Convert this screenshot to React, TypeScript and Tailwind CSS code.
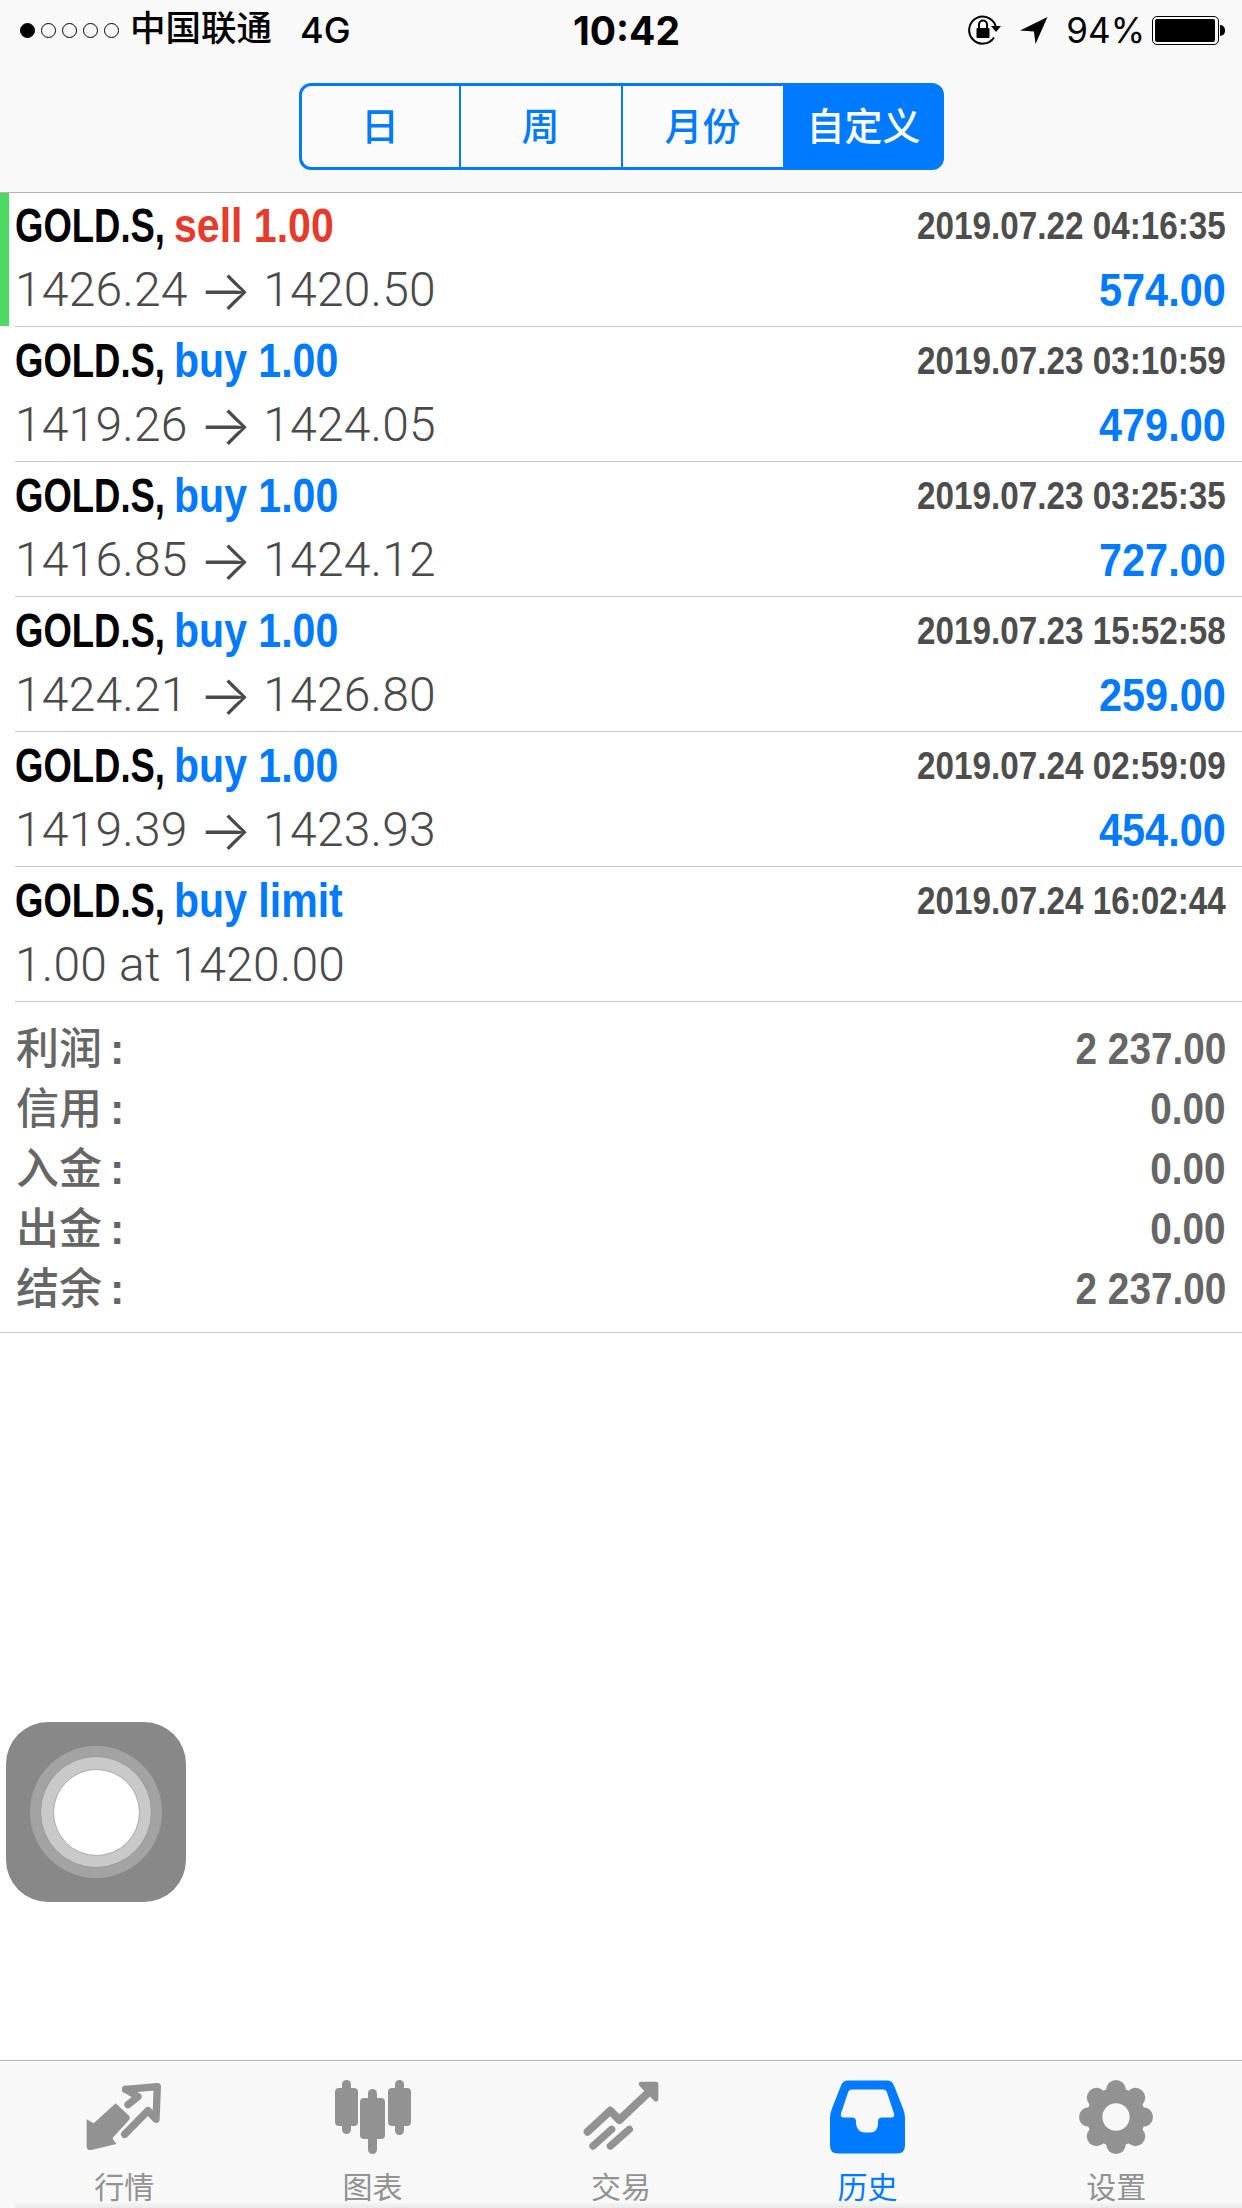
const SANS = "font-['Liberation_Sans','Noto_Sans_CJK_SC',sans-serif]";

const orders = [
  { side: "sell 1.00", color: "text-[#e63b2a]", time: "2019.07.22 04:16:35", from: "1426.24", to: "1420.50", profit: "574.00", active: true },
  { side: "buy 1.00", color: "text-[#007aff]", time: "2019.07.23 03:10:59", from: "1419.26", to: "1424.05", profit: "479.00" },
  { side: "buy 1.00", color: "text-[#007aff]", time: "2019.07.23 03:25:35", from: "1416.85", to: "1424.12", profit: "727.00" },
  { side: "buy 1.00", color: "text-[#007aff]", time: "2019.07.23 15:52:58", from: "1424.21", to: "1426.80", profit: "259.00" },
  { side: "buy 1.00", color: "text-[#007aff]", time: "2019.07.24 02:59:09", from: "1419.39", to: "1423.93", profit: "454.00" },
  { side: "buy limit", color: "text-[#007aff]", time: "2019.07.24 16:02:44", note: "1.00 at 1420.00", profit: "" },
];

const summary = [
  ["利润", "2 237.00"],
  ["信用", "0.00"],
  ["入金", "0.00"],
  ["出金", "0.00"],
  ["结余", "2 237.00"],
];

function StatusBar() {
  return (
    <div className="grid h-[60px] grid-cols-[1fr_auto_1fr] items-center pl-5 pr-[17px] text-black">
      <div className="flex items-center">
        <div className="flex gap-[6px]">
          <span className="size-[15px] rounded-full border border-black bg-black" />
          <span className="size-[15px] rounded-full border border-black" />
          <span className="size-[15px] rounded-full border border-black" />
          <span className="size-[15px] rounded-full border border-black" />
          <span className="size-[15px] rounded-full border border-black" />
        </div>
        <span className="ml-[11px] text-[35.5px] leading-none font-medium">中国联通</span>
        <span className="ml-[28px] font-['Inter',sans-serif] text-[36px] leading-none font-medium">4G</span>
      </div>
      <div className="ml-2 font-['Inter',sans-serif] text-[39px] leading-none font-bold">10:42</div>
      <div className="flex items-center justify-end">
        <svg width="36" height="30" viewBox="0 0 36 30" fill="none" className="mr-[17px]">
          <path d="M27 22.5A13.5 13.5 0 1 1 29 13" stroke="#000" strokeWidth="2" />
          <path d="M24 11h10l-5 6z" fill="#000" />
          <rect x="9.5" y="13" width="13" height="10" rx="1" fill="#000" />
          <path d="M12 13V9.5a4 4 0 0 1 8 0V13" stroke="#000" strokeWidth="2" />
        </svg>
        <svg width="28" height="27" viewBox="0 0 28 27" className="mr-[18px]">
          <path d="M27.5 0 0 13.5l14 1L15.5 27z" fill="#000" />
        </svg>
        <span className="font-['Inter',sans-serif] text-[35px] leading-none">94%</span>
        <div className="ml-[7px] flex h-[29px] w-[67px] rounded-[5px] border-[1.5px] border-black p-[2px]">
          <div className="h-full w-[60px] rounded-[2px] bg-black" />
        </div>
        <div className="ml-[1px] h-[11px] w-[5px] rounded-r-full bg-black" />
      </div>
    </div>
  );
}

function Segments() {
  return (
    <div className="mx-auto mt-[23px] flex h-[87px] w-[645px] text-[38px] font-medium text-[#007aff]">
      <div className="flex w-[161px] items-center justify-center rounded-l-[12px] border-[3px] border-r-[1.5px] border-[#007aff] bg-white/40 pt-[2px]">日</div>
      <div className="flex w-[162px] items-center justify-center border-[3px] border-x-[1.5px] border-[#007aff] bg-white/40 pt-[2px]">周</div>
      <div className="flex w-[162px] items-center justify-center border-[3px] border-x-[1.5px] border-[#007aff] bg-white/40 pt-[2px]">月份</div>
      <div className="flex w-[160px] items-center justify-center rounded-r-[12px] bg-[#007aff] pt-[2px] text-white">自定义</div>
    </div>
  );
}

function OrderRow({ order }: { order: (typeof orders)[number] }) {
  return (
    <div className={`flex ${order.active ? "h-[134px]" : "h-[135px]"}`}>
      <div className="w-[15px]">
        {order.active && <div className="h-[133px] w-[9px] bg-[#4cd964]" />}
      </div>
      <div className={`flex-1 border-b border-[#c8c7cc] pr-4 ${order.active ? "pt-[9px]" : "pt-[10px]"}`}>
        <div className="flex h-[48px] items-center justify-between">
          <div className="flex text-[48px] leading-none font-bold whitespace-nowrap">
            <span className="w-[159px] origin-left scale-x-[0.76] text-black">GOLD.S,</span>
            <span className={`origin-left scale-x-[0.855] ${order.color}`}>{order.side}</span>
          </div>
          <div className="origin-right scale-x-[0.875] text-[38px] leading-none font-bold whitespace-nowrap text-[#4d4d4d]">{order.time}</div>
        </div>
        <div className="mt-[16px] flex h-[48px] items-center justify-between">
          <div className="flex items-center font-['Roboto','Liberation_Sans',sans-serif] text-[48px] leading-none font-light tracking-[0.2px] whitespace-nowrap text-[#4a4a4a]">
            {order.note ?? (
              <>
                <span>{order.from}</span>
                <span className="mx-[11px] font-['Inter',sans-serif] text-[56px]">→</span>
                <span>{order.to}</span>
              </>
            )}
          </div>
          <div className="origin-right scale-x-[0.9] text-[46px] leading-none font-bold text-[#007aff]">{order.profit}</div>
        </div>
      </div>
    </div>
  );
}

function Summary() {
  return (
    <div className="border-b border-[#c8c7cc] px-4 pt-[17px] pb-[13px] text-[#666666]">
      {summary.map(([label, value]) => (
        <div key={label} className="flex h-[60px] items-center justify-between">
          <span className="text-[43px] leading-none font-medium">
            {label}
            <span className="ml-[8px] font-bold">:</span>
          </span>
          <span className="origin-right scale-x-[0.88] text-[44px] leading-none font-bold">{value}</span>
        </div>
      ))}
    </div>
  );
}

function MarketIcon() {
  return (
    <svg width="80" height="74" viewBox="70 30 240 222" fill="none">
      <path d="M165 100 206 138Q210 144 205 150L155 205 167 222 92 240Q79 242 78 230L78 148 99 160z" fill="#929292" />
      <path d="M195 58 290 50 286 148 262 122 192 193" stroke="#929292" strokeWidth="22" strokeLinejoin="round" strokeLinecap="round" />
      <path d="M195 58 232 80 202 104" stroke="#929292" strokeWidth="22" strokeLinejoin="round" strokeLinecap="round" />
    </svg>
  );
}

function ChartIcon() {
  return (
    <svg width="76" height="74" viewBox="0 0 76 74" fill="#929292">
      <rect x="7" y="0" width="9" height="54" rx="4.5" />
      <rect x="0" y="8" width="23" height="38" rx="4" />
      <rect x="33" y="9" width="9" height="65" rx="4.5" />
      <path fillRule="evenodd" d="M29 18h17a4 4 0 0 1 4 4v33a4 4 0 0 1-4 4H29a4 4 0 0 1-4-4V22a4 4 0 0 1 4-4zM34 27v25h6V27z" />
      <rect x="60" y="0" width="9" height="55" rx="4.5" />
      <rect x="53" y="8" width="23" height="38" rx="4" />
    </svg>
  );
}

function TradeIcon() {
  return (
    <svg width="80" height="74" viewBox="30 30 240 222" fill="none" stroke="#929292" strokeLinecap="round" strokeLinejoin="round">
      <path d="M50 185 118 122 145 150 235 65" strokeWidth="24" />
      <path d="M210 42H255V88z" fill="#929292" strokeWidth="14" />
      <path d="M66 228 122 178" strokeWidth="22" />
      <path d="M118 228 175 178" strokeWidth="22" />
    </svg>
  );
}

function HistoryIcon() {
  return (
    <svg width="75" height="74" viewBox="0 0 75 73">
      <path d="M18 0H57Q62 0 64 5L73 28Q75 33 75 38V65Q75 73 67 73H8Q0 73 0 65V38Q0 33 2 28L11 5Q13 0 18 0z" fill="#007aff" />
      <path d="M22 9H53Q56 9 57 12L64 33Q65 37 61 37H52Q48 37 48 41V43Q48 52 40 52H35Q27 52 26 43V41Q26 37 22 37H14Q10 37 11 33L18 12Q19 9 22 9z" fill="#f8f8f8" />
    </svg>
  );
}

function GearIcon() {
  return (
    <svg width="76" height="74" viewBox="0 0 76 76" fill="#929292">
      <circle cx="38" cy="38" r="30" />
      <circle cx="38" cy="10" r="10" />
      <circle cx="38" cy="66" r="10" />
      <circle cx="10" cy="38" r="10" />
      <circle cx="66" cy="38" r="10" />
      <circle cx="18" cy="18" r="10" />
      <circle cx="58" cy="18" r="10" />
      <circle cx="18" cy="58" r="10" />
      <circle cx="58" cy="58" r="10" />
      <circle cx="38" cy="38" r="14" fill="#f8f8f8" />
    </svg>
  );
}

const tabs = [
  { label: "行情", icon: <MarketIcon />, className: "text-[#929292]" },
  { label: "图表", icon: <ChartIcon />, className: "text-[#929292]" },
  { label: "交易", icon: <TradeIcon />, className: "text-[#929292]" },
  { label: "历史", icon: <HistoryIcon />, className: "pr-[4px] text-[#007aff]" },
  { label: "设置", icon: <GearIcon />, className: "pr-[3px] text-[#929292]" },
];

function TabBar() {
  return (
    <div className="mt-auto grid h-[148px] grid-cols-5 border-t border-[#b2b2b2] bg-[#f8f8f8]">
      {tabs.map((tab) => (
        <div key={tab.label} className={`flex flex-col items-center pt-[19px] ${tab.className}`}>
          {tab.icon}
          <span className="mt-[19px] text-[30px] leading-[30px]">{tab.label}</span>
        </div>
      ))}
    </div>
  );
}

export default function App() {
  return (
    <div className={`relative flex h-[2208px] w-[1242px] flex-col overflow-hidden bg-white ${SANS}`}>
      <div className="h-[193px] border-b border-[#b2b2b2] bg-[#f9f9f9]">
        <StatusBar />
        <Segments />
      </div>
      {orders.map((order) => (
        <OrderRow key={order.time} order={order} />
      ))}
      <Summary />
      <TabBar />
      {/* AssistiveTouch button floats over the page */}
      <div className="absolute top-[1722px] left-[6px] flex size-[180px] items-center justify-center rounded-[42px] bg-[#888888]">
        <div className="flex size-[132px] items-center justify-center rounded-full bg-[#a3a3a3]">
          <div className="flex size-[112px] items-center justify-center rounded-full border border-[#999999] bg-[#c9c9c9]">
            <div className="size-[87px] rounded-full border border-[#aaaaaa] bg-white" />
          </div>
        </div>
      </div>
      <div className="absolute right-0 bottom-0 left-[15px] h-[5px] bg-gradient-to-b from-[#f4f4f4] to-[#e9e9e9]" />
    </div>
  );
}
